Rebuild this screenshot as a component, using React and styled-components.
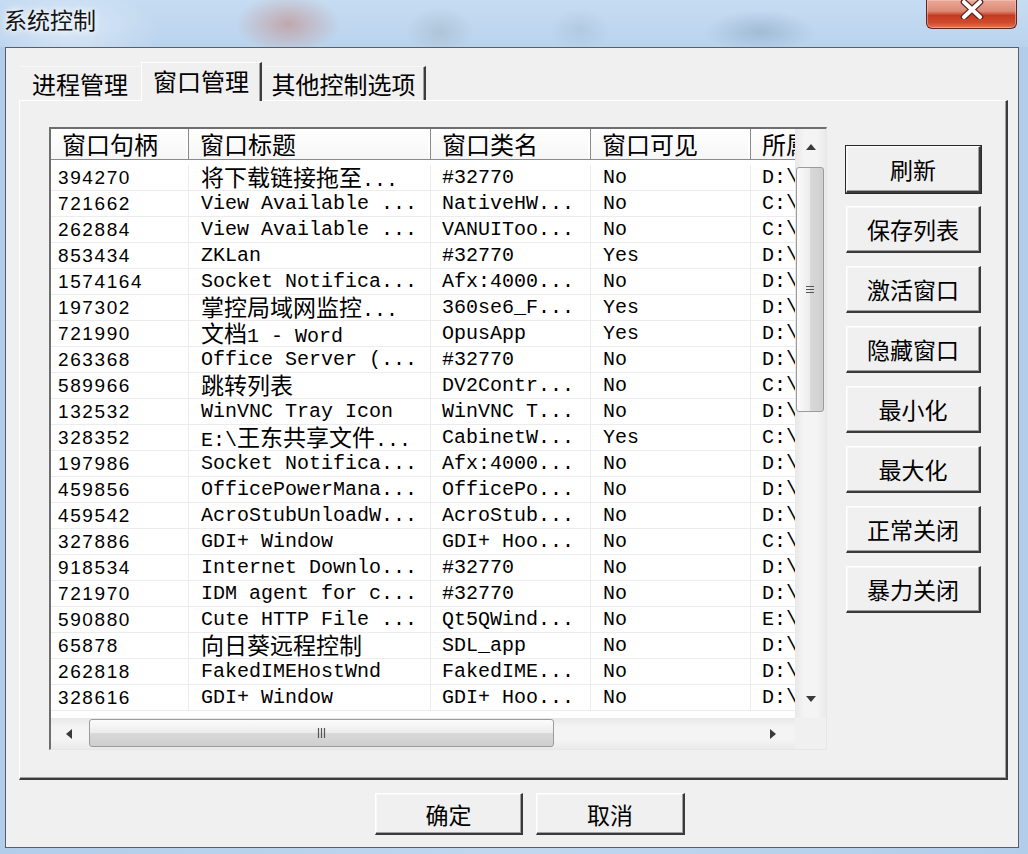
import React from 'react';
import styled, { createGlobalStyle, css } from 'styled-components';

const GlobalStyle = createGlobalStyle`
  html, body { margin: 0; padding: 0; background: #b9d3ee; }
  body { width: 1028px; height: 854px; overflow: hidden; font-family: "Noto Sans CJK SC", "Noto Sans", sans-serif; }
  #root { width: 1028px; height: 854px; }
  * { box-sizing: border-box; }
`;

const Window = styled.div`
  width: 1028px;
  height: 854px;
  display: flex;
  flex-direction: column;
  background: linear-gradient(to right, #b2cdea, #c0d7ef 50%, #b2cdea);
`;

const TitleBar = styled.div`
  height: 47px;
  flex: none;
  display: flex;
  align-items: flex-start;
  background:
    radial-gradient(ellipse 52px 30px at 288px 24px, rgba(196, 128, 118, 0.55), rgba(196, 128, 118, 0) 100%),
    radial-gradient(ellipse 34px 26px at 440px 32px, rgba(150, 165, 175, 0.35), rgba(150, 165, 175, 0) 100%),
    radial-gradient(ellipse 55px 22px at 760px 32px, rgba(110, 140, 170, 0.35), rgba(110, 140, 170, 0) 100%),
    radial-gradient(ellipse 30px 22px at 580px 30px, rgba(140, 165, 185, 0.25), rgba(140, 165, 185, 0) 100%),
    radial-gradient(ellipse 90px 40px at 70px 30px, rgba(235, 242, 250, 0.6), rgba(235, 242, 250, 0) 100%),
    linear-gradient(to bottom, #c6dcf2, #bad3ed);
`;

const Title = styled.div`
  margin: 5px 0 0 4px;
  font-family: "Noto Sans CJK SC", sans-serif;
  font-size: 23px;
  line-height: 28px;
  color: #141414;
  text-shadow: 0 0 6px #ffffff, 0 0 10px rgba(255, 255, 255, 0.8);
`;

const CloseButton = styled.div`
  margin-left: auto;
  margin-right: 11px;
  width: 91px;
  height: 29px;
  border: 1px solid #5c271f;
  border-top: none;
  border-radius: 0 0 6px 6px;
  background: linear-gradient(to bottom, #e9a899 0%, #dc8a76 40%, #c43b22 55%, #cf4a2b 80%, #e07452 100%);
  box-shadow: inset 0 0 0 1px rgba(255, 210, 200, 0.45);
  display: flex;
  justify-content: center;
`;

const Client = styled.div`
  flex: 1;
  margin: 0 9px 6px 5px;
  border: 1px solid #56606c;
  background: #f0f0f0;
  display: flex;
  flex-direction: column;
  padding: 14px 10px 12px 13px;
`;

const TabRow = styled.div`
  height: 38px;
  display: flex;
  align-items: flex-end;
  padding-left: 1px;
  position: relative;
  z-index: 1;
`;

const Tab = styled.div`
  height: ${(p) => (p.$active ? 39 : 34)}px;
  width: ${(p) => p.$w}px;
  margin-bottom: ${(p) => (p.$active ? -1 : 0)}px;
  padding-top: ${(p) => (p.$active ? 1 : 0)}px;
  font-size: 24px;
  line-height: 34px;
  color: #000;
  text-align: center;
  background: #f0f0f0;
  border-top: 1px solid ${(p) => (p.$active ? '#ffffff' : '#f7f7f7')};
  border-left: 1px solid ${(p) => (p.$active ? '#ffffff' : 'transparent')};
  border-right: 2px solid ${(p) => (p.$last || p.$active ? '#3c3c3c' : 'transparent')};
  box-shadow: ${(p) => (p.$last || p.$active ? 'inset -1px 0 0 #a0a0a0' : 'none')};
`;

const Panel = styled.div`
  height: 680px;
  display: flex;
  align-items: flex-start;
  padding: 26px 0 0 29px;
  gap: 19px;
  background: #f0f0f0;
  border-top: 1px solid #ffffff;
  border-left: 1px solid #ffffff;
  border-right: 2px solid #3c3c3c;
  border-bottom: 2px solid #3c3c3c;
  box-shadow: inset -1px -1px 0 #a0a0a0;
`;

const ListBox = styled.div`
  width: 778px;
  height: 623px;
  flex: none;
  border-top: 2px solid #6e6e6e;
  border-left: 2px solid #6e6e6e;
  border-right: 1px solid #e6e6e6;
  border-bottom: 1px solid #e6e6e6;
  display: grid;
  grid-template-columns: 1fr 31px;
  grid-template-rows: 1fr 31px;
  background: #ffffff;
`;

const Content = styled.div`
  overflow: hidden;
  background: #ffffff;
`;

const HeaderRow = styled.div`
  display: flex;
  height: 31px;
  border-bottom: 1px solid #8a8a8a;
  background: linear-gradient(to bottom, #ffffff, #f6f6f6);
  margin-bottom: 5px;
  white-space: nowrap;
`;

const HeaderCell = styled.div`
  flex: none;
  width: ${(p) => p.$w}px;
  padding-left: 11px;
  font-size: 24px;
  line-height: 30px;
  color: #000;
  border-right: 1px solid #8a8a8a;
  box-shadow: inset -2px 0 0 #ffffff;
  overflow-x: ${(p) => (p.$clip ? 'hidden' : 'visible')};
`;

const Row = styled.div`
  display: flex;
  height: 26px;
  border-bottom: 1px solid #ececec;
  white-space: nowrap;
`;

const Cell = styled.div`
  flex: none;
  width: ${(p) => p.$w}px;
  padding-left: ${(p) => p.$pad}px;
  border-right: 1px solid #ececec;
  overflow-x: ${(p) => (p.$clip ? 'hidden' : 'visible')};
  font-family: "Liberation Mono", "DejaVu Sans Mono", monospace;
  font-size: 20px;
  line-height: 26px;
  color: #000;
  ${(p) =>
    p.$num &&
    css`
      font-family: "Liberation Sans", Arial, sans-serif;
      font-size: 19px;
      letter-spacing: 1.6px;
    `}
`;

const Han = styled.span`
  font-family: "Noto Sans CJK SC", sans-serif;
  font-size: 23px;
  line-height: 1;
  letter-spacing: 0;
`;

const VScroll = styled.div`
  display: flex;
  flex-direction: column;
  background: linear-gradient(to right, #e8e8e8, #f4f4f4 30%, #f4f4f4 70%, #eaeaea);
`;

const HScroll = styled.div`
  display: flex;
  align-items: stretch;
  background: linear-gradient(to bottom, #e8e8e8, #f4f4f4 30%, #f4f4f4 70%, #eaeaea);
`;

const Corner = styled.div`
  background: #f0f0f0;
`;

const ArrowButton = styled.div`
  flex: none;
  width: ${(p) => p.$w}px;
  height: ${(p) => p.$h}px;
  display: flex;
  align-items: center;
  justify-content: center;
`;

const Thumb = styled.div`
  flex: none;
  border: 1px solid #9b9b9b;
  border-radius: 3px;
  display: flex;
  align-items: center;
  justify-content: center;
  ${(p) =>
    p.$vertical
      ? css`
          width: 28px;
          height: 245px;
          margin: 2px 0 0 1px;
          background: linear-gradient(to right, #fbfbfb, #ececec 50%, #d9d9d9 51%, #cfcfcf);
        `
      : css`
          height: 28px;
          width: 465px;
          margin: 1px 0 0 2px;
          background: linear-gradient(to bottom, #fbfbfb, #ececec 50%, #d9d9d9 51%, #cfcfcf);
        `}
`;

const Spacer = styled.div`
  flex: 1;
`;

const Buttons = styled.div`
  display: flex;
  flex-direction: column;
  gap: 13px;
  margin-top: 19px;
`;

const Btn = styled.div`
  width: ${(p) => p.$w}px;
  height: ${(p) => p.$h}px;
  display: flex;
  align-items: center;
  justify-content: center;
  font-size: 23px;
  color: #000;
  background: #f0f0f0;
  border-top: 1px solid #ffffff;
  border-left: 1px solid #ffffff;
  border-right: 2px solid #3a3a3a;
  border-bottom: 2px solid #3a3a3a;
  box-shadow: inset -1px -1px 0 #a0a0a0, inset 1px 1px 0 #f8f8f8;
  ${(p) =>
    p.$default &&
    css`
      outline: 1px solid #2a2a2a;
      border-top-color: #f8f8f8;
      border-left-color: #f8f8f8;
    `}
`;

const BottomRow = styled.div`
  display: flex;
  gap: 13px;
  margin-top: 13px;
  padding-left: 356px;
`;

const CJK = /([\u2E80-\u9FFF\uF900-\uFAFF\uFF00-\uFFEF]+)/;

function Mixed({ text }) {
  return text
    .split(CJK)
    .filter(Boolean)
    .map((part, i) =>
      CJK.test(part) ? <Han key={i}>{part}</Han> : <React.Fragment key={i}>{part}</React.Fragment>
    );
}

const cols = [
  { w: 138, pad: 7 },
  { w: 242, pad: 12 },
  { w: 160, pad: 11 },
  { w: 160, pad: 12 },
  { w: 45, pad: 11, clip: true },
];

const headers = ['窗口句柄', '窗口标题', '窗口类名', '窗口可见', '所属文件'];

const rows = [
  ['394270', '将下载链接拖至...', '#32770', 'No', 'D:\\'],
  ['721662', 'View Available ...', 'NativeHW...', 'No', 'C:\\'],
  ['262884', 'View Available ...', 'VANUIToo...', 'No', 'C:\\'],
  ['853434', 'ZKLan', '#32770', 'Yes', 'D:\\'],
  ['1574164', 'Socket Notifica...', 'Afx:4000...', 'No', 'D:\\'],
  ['197302', '掌控局域网监控...', '360se6_F...', 'Yes', 'D:\\'],
  ['721990', '文档1 - Word', 'OpusApp', 'Yes', 'D:\\'],
  ['263368', 'Office Server (...', '#32770', 'No', 'D:\\'],
  ['589966', '跳转列表', 'DV2Contr...', 'No', 'C:\\'],
  ['132532', 'WinVNC Tray Icon', 'WinVNC T...', 'No', 'D:\\'],
  ['328352', 'E:\\王东共享文件...', 'CabinetW...', 'Yes', 'C:\\'],
  ['197986', 'Socket Notifica...', 'Afx:4000...', 'No', 'D:\\'],
  ['459856', 'OfficePowerMana...', 'OfficePo...', 'No', 'D:\\'],
  ['459542', 'AcroStubUnloadW...', 'AcroStub...', 'No', 'D:\\'],
  ['327886', 'GDI+ Window', 'GDI+ Hoo...', 'No', 'C:\\'],
  ['918534', 'Internet Downlo...', '#32770', 'No', 'D:\\'],
  ['721970', 'IDM agent for c...', '#32770', 'No', 'D:\\'],
  ['590880', 'Cute HTTP File ...', 'Qt5QWind...', 'No', 'E:\\'],
  ['65878', '向日葵远程控制', 'SDL_app', 'No', 'D:\\'],
  ['262818', 'FakedIMEHostWnd', 'FakedIME...', 'No', 'D:\\'],
  ['328616', 'GDI+ Window', 'GDI+ Hoo...', 'No', 'D:\\'],
];

const sideButtons = ['刷新', '保存列表', '激活窗口', '隐藏窗口', '最小化', '最大化', '正常关闭', '暴力关闭'];

const Arrow = ({ dir }) => {
  const pts = {
    up: '0,6 5,0 10,6',
    down: '0,0 10,0 5,6',
    left: '6,0 6,10 0,5',
    right: '0,0 0,10 6,5',
  }[dir];
  const vert = dir === 'up' || dir === 'down';
  return (
    <svg width={vert ? 10 : 6} height={vert ? 6 : 10} viewBox={vert ? '0 0 10 6' : '0 0 6 10'}>
      <polygon points={pts} fill="#3a3a3a" />
    </svg>
  );
};

const Grip = ({ vertical }) =>
  vertical ? (
    <svg width="10" height="9" viewBox="0 0 10 9">
      <path d="M1 1.5H9M1 4.5H9M1 7.5H9" stroke="#555" strokeWidth="1.2" />
    </svg>
  ) : (
    <svg width="9" height="12" viewBox="0 0 9 12">
      <path d="M1.5 1V11M4.5 1V11M7.5 1V11" stroke="#555" strokeWidth="1.2" />
    </svg>
  );

export default function App() {
  return (
    <>
      <GlobalStyle />
      <Window>
        <TitleBar>
          <Title>系统控制</Title>
          <CloseButton>
            <svg width="26" height="19" viewBox="0 0 26 19">
              <path d="M5 2L21 17M21 2L5 17" stroke="#5a2018" strokeWidth="6.5" strokeLinecap="round" />
              <path d="M5 2L21 17M21 2L5 17" stroke="#ffffff" strokeWidth="4" strokeLinecap="round" />
            </svg>
          </CloseButton>
        </TitleBar>
        <Client>
          <TabRow>
            <Tab $w={121}>进程管理</Tab>
            <Tab $w={121} $active>
              窗口管理
            </Tab>
            <Tab $w={164} $last>
              其他控制选项
            </Tab>
          </TabRow>
          <Panel>
            <ListBox>
              <Content>
                <HeaderRow>
                  {headers.map((h, i) => (
                    <HeaderCell key={h} $w={cols[i].w} $clip={cols[i].clip}>
                      {h}
                    </HeaderCell>
                  ))}
                </HeaderRow>
                {rows.map((r, ri) => (
                  <Row key={ri}>
                    {r.map((v, ci) => (
                      <Cell key={ci} $w={cols[ci].w} $pad={cols[ci].pad} $num={ci === 0} $clip={cols[ci].clip}>
                        <Mixed text={v} />
                      </Cell>
                    ))}
                  </Row>
                ))}
              </Content>
              <VScroll>
                <ArrowButton $w={31} $h={36}>
                  <Arrow dir="up" />
                </ArrowButton>
                <Thumb $vertical>
                  <Grip vertical />
                </Thumb>
                <Spacer />
                <ArrowButton $w={31} $h={38}>
                  <Arrow dir="down" />
                </ArrowButton>
              </VScroll>
              <HScroll>
                <ArrowButton $w={36} $h={31}>
                  <Arrow dir="left" />
                </ArrowButton>
                <Thumb>
                  <Grip />
                </Thumb>
                <Spacer />
                <ArrowButton $w={44} $h={31}>
                  <Arrow dir="right" />
                </ArrowButton>
              </HScroll>
              <Corner />
            </ListBox>
            <Buttons>
              {sideButtons.map((b, i) => (
                <Btn key={b} $w={135} $h={47} $default={i === 0}>
                  {b}
                </Btn>
              ))}
            </Buttons>
          </Panel>
          <BottomRow>
            <Btn $w={148} $h={42}>确定</Btn>
            <Btn $w={149} $h={42}>取消</Btn>
          </BottomRow>
        </Client>
      </Window>
    </>
  );
}
